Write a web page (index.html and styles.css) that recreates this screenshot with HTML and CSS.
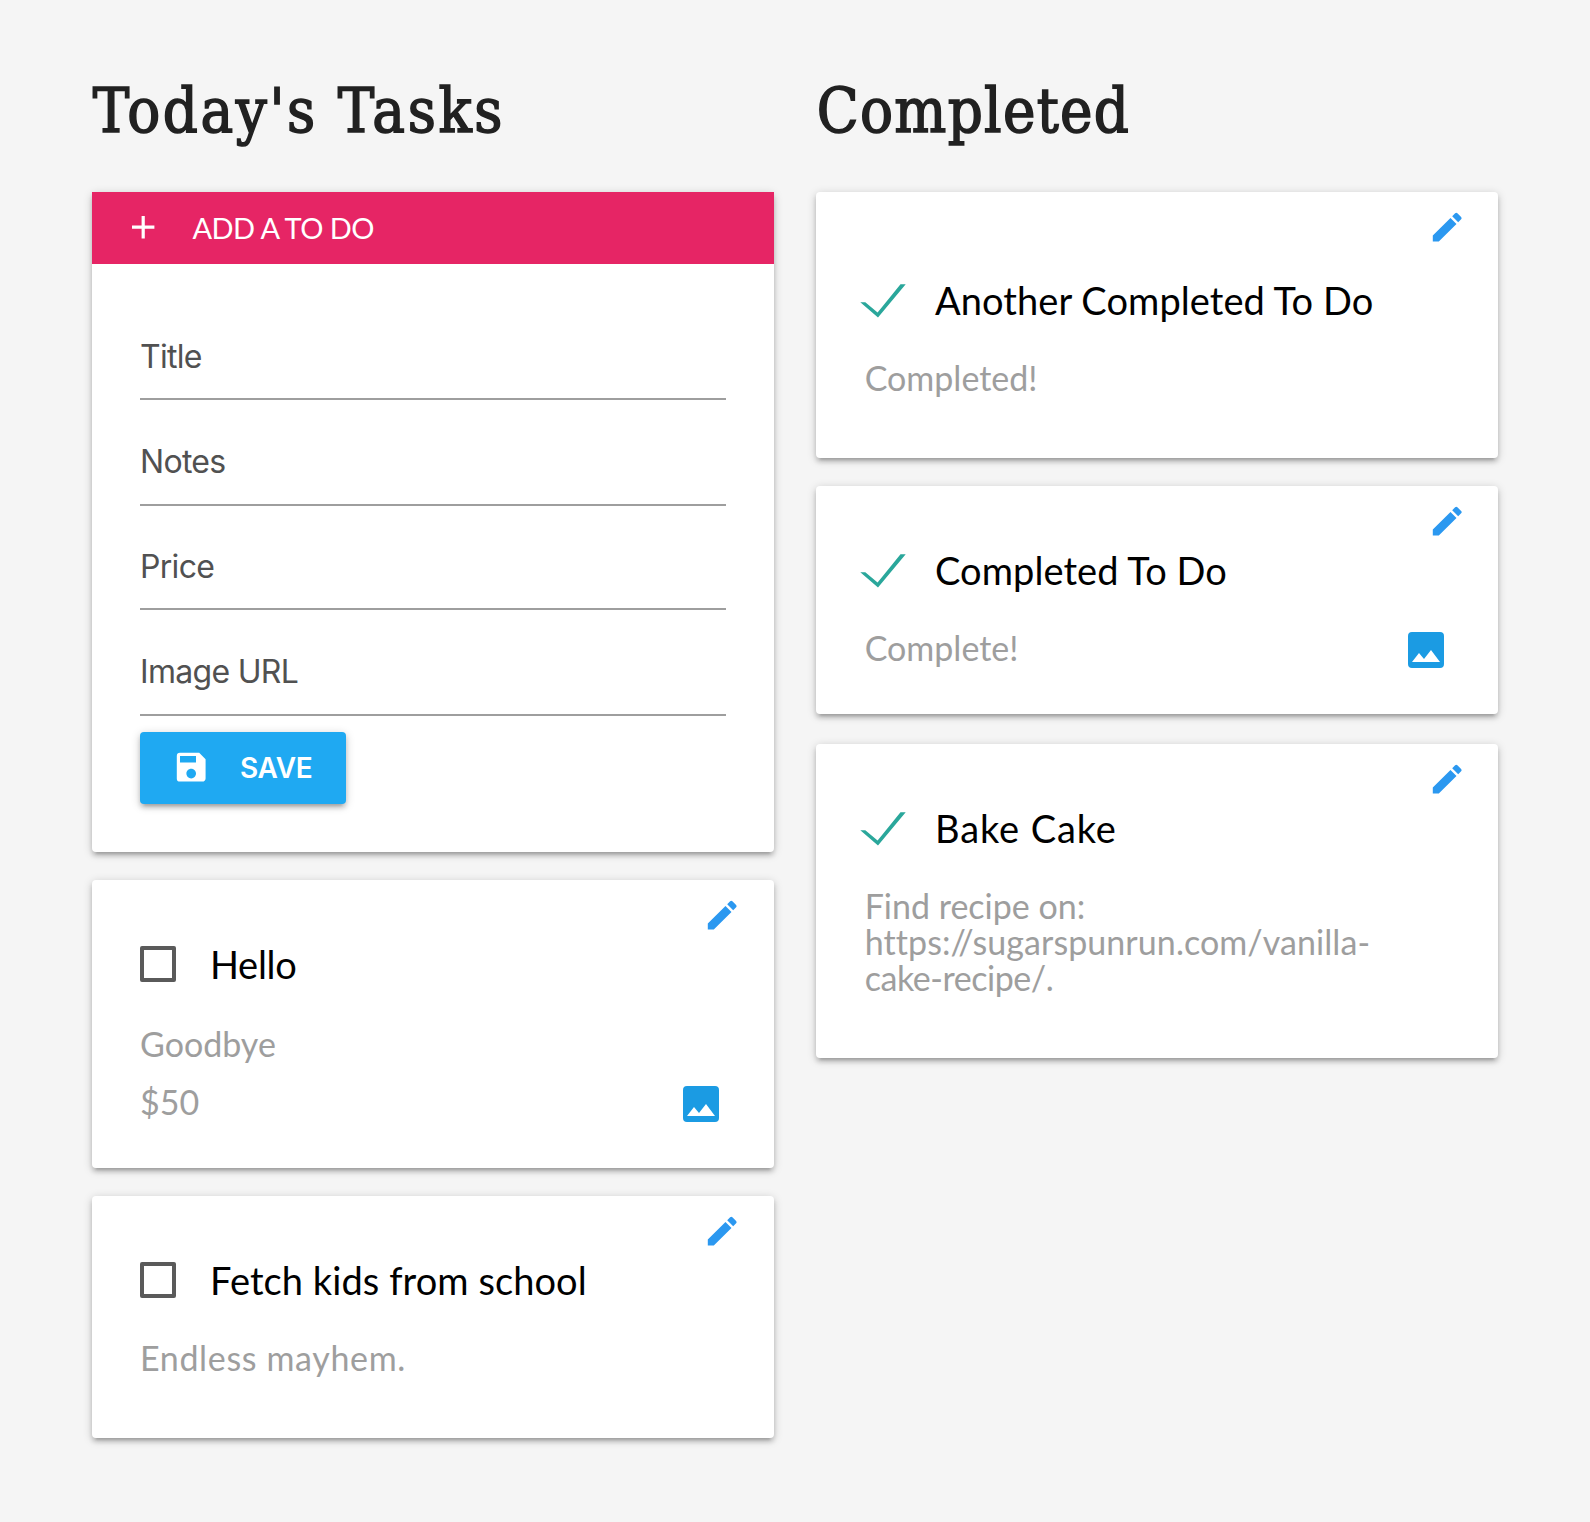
FILE: index.html
```html
<!DOCTYPE html>
<html lang="en">
<head>
<meta charset="utf-8">
<title>Today's Tasks</title>
<link rel="stylesheet" href="styles.css">
</head>
<body>
<svg class="sprite" aria-hidden="true">
  <symbol id="edit" viewBox="0 0 24 24"><path d="M3 17.25V21h3.75L17.81 9.94l-3.75-3.75L3 17.25zM20.71 7.04a1 1 0 0 0 0-1.41l-2.34-2.34a1 1 0 0 0-1.41 0l-1.83 1.83 3.75 3.75 1.83-1.83z"/></symbol>
  <symbol id="photo" viewBox="0 0 36 36"><path fill-rule="evenodd" d="M4 0H32A4 4 0 0 1 36 4V32A4 4 0 0 1 32 36H4A4 4 0 0 1 0 32V4A4 4 0 0 1 4 0ZM11 21L4 30H32L23 18L16 27Z"/></symbol>
  <symbol id="check" viewBox="0 0 46 34"><path d="M.3 18.3H5.3L17.6 28.6L40.5.3H45.7L18 33.5Z"/></symbol>
</svg>
<main class="board">
  <section class="column">
    <h1 class="heading">Today's Tasks</h1>
    <form class="card form-card">
      <div class="form-header">
        <svg class="icon" viewBox="0 0 24 24"><path d="M19 13h-6v6h-2v-6H5v-2h6V5h2v6h6v2z"/></svg>
        <span>ADD A TO DO</span>
      </div>
      <div class="fields">
        <label class="field">Title</label>
        <label class="field tall">Notes</label>
        <label class="field">Price</label>
        <label class="field tall">Image URL</label>
        <button class="save" type="button">
          <svg class="icon" viewBox="0 0 24 24"><path d="M17 3H5a2 2 0 0 0-2 2v14a2 2 0 0 0 2 2h14c1.1 0 2-.9 2-2V7l-4-4zm-5 16c-1.66 0-3-1.34-3-3s1.34-3 3-3 3 1.34 3 3-1.34 3-3 3zm3-10H5V5h10v4z"/></svg>
          <span>SAVE</span>
        </button>
      </div>
    </form>
    <article class="card card-priced">
      <svg class="edit"><use href="#edit"/></svg>
      <div class="title snug"><i class="box"></i><span>Hello</span></div>
      <p class="notes">Goodbye</p>
      <div class="price"><span>$50</span><svg class="photo"><use href="#photo"/></svg></div>
    </article>
    <article class="card card-plain">
      <svg class="edit"><use href="#edit"/></svg>
      <div class="title"><i class="box"></i><span>Fetch kids from school</span></div>
      <p class="notes loose">Endless mayhem.</p>
    </article>
  </section>
  <section class="column done">
    <h1 class="heading">Completed</h1>
    <article class="card card-spaced">
      <svg class="edit"><use href="#edit"/></svg>
      <div class="title"><svg class="check"><use href="#check"/></svg><span>Another Completed To Do</span></div>
      <p class="notes">Completed!</p>
    </article>
    <article class="card card-photo">
      <svg class="edit"><use href="#edit"/></svg>
      <div class="title"><svg class="check"><use href="#check"/></svg><span>Completed To Do</span></div>
      <div class="notes with-photo"><span>Complete!</span><svg class="photo"><use href="#photo"/></svg></div>
    </article>
    <article class="card card-long">
      <svg class="edit"><use href="#edit"/></svg>
      <div class="title loose"><svg class="check"><use href="#check"/></svg><span>Bake Cake</span></div>
      <p class="notes">Find recipe on:<br><span class="url">https://sugarspunrun.com/vanilla-</span><br><span class="url-end">cake-recipe/.</span></p>
    </article>
  </section>
</main>
</body>
</html>
```
FILE: styles.css
```css
* { box-sizing: border-box; }
body { margin: 0; background: #f5f5f5; font-family: Lato, sans-serif; }
.sprite { display: none; }
.board { display: grid; grid-template-columns: 682px 682px; column-gap: 42px; padding: 0 92px; height: 1522px; }
.heading { height: 192px; margin: 0; padding: 75px 0 0 .7px; font: 400 61px/72px "DejaVu Serif Condensed", "DejaVu Serif", serif; letter-spacing: 2.6px; color: #212121; -webkit-text-stroke: 1.5px #212121; white-space: nowrap; }
.done .heading { letter-spacing: 1.3px; }
.card { position: relative; margin: 0 0 28px; padding: 48px; background: #fff; border-radius: 4px; box-shadow: 0 4px 4px 0 rgba(0,0,0,.14), 0 6px 2px -4px rgba(0,0,0,.12), 0 2px 10px 0 rgba(0,0,0,.2); }
.icon { width: 38.4px; height: 38.4px; margin-bottom: 2px; fill: #fff; flex: none; }
.form-card { height: 660px; padding: 0; }
.form-header { display: flex; align-items: center; gap: 30px; height: 72px; padding-left: 32px; background: #e62565; color: #fff; font-size: 29px; letter-spacing: -.55px; }
.form-header span { padding-bottom: 2px; }
.fields { padding: 48px; }
.field { display: block; height: 104px; padding-top: 39px; border-bottom: 2px solid #9e9e9e; font: 400 32px/44px Inter, sans-serif; letter-spacing: -.7px; color: #515151; }
.field:first-child { height: 88px; padding-top: 23px; }
.field.tall { height: 106px; padding-top: 40px; }
.save { display: flex; align-items: center; gap: 29.5px; width: 206px; height: 72px; margin-top: 16px; padding: 0 0 0 32px; border: 0; border-radius: 4px; background: #1fa9f2; color: #fff; font: 600 28px/40px Inter, sans-serif; letter-spacing: -.2px; box-shadow: 0 4px 4px 0 rgba(0,0,0,.14), 0 6px 2px -4px rgba(0,0,0,.12), 0 2px 10px 0 rgba(0,0,0,.2); }
.edit { position: absolute; top: 16px; right: 32.6px; width: 38.4px; height: 38.4px; fill: #2b98f0; }
.done .edit { right: 32px; }
.title { display: flex; align-items: center; height: 72px; font-size: 38px; letter-spacing: .08px; color: #000; white-space: nowrap; }
.title.snug { letter-spacing: -.3px; }
.title.loose { letter-spacing: .9px; }
.box { width: 36px; height: 36px; margin-right: 34px; border: 4px solid #5a5a5a; border-radius: 2px; }
.check { width: 46px; height: 34px; margin: 2px 29px 0 -4px; fill: #2aa79b; }
.notes { margin: 24px 0 0; font-size: 34px; line-height: 36px; color: #9e9e9e; }
.notes.loose { letter-spacing: .65px; }
.done .notes { padding-left: .7px; }
.url { letter-spacing: .07px; }
.url-end { letter-spacing: -.45px; }
.price, .with-photo { display: flex; justify-content: space-between; align-items: flex-start; }
.price { margin-top: 22px; font-size: 34px; line-height: 36px; color: #9e9e9e; }
.photo { width: 36px; height: 36px; margin: 2px 7px 0 0; fill: #1b9be3; }
.done .photo { margin-right: 6.5px; }
.card-priced { height: 288px; }
.card-priced .notes { margin-top: 26px; }
.card-plain { height: 242px; }
.card-spaced { height: 266px; padding-top: 72px; }
.card-photo { height: 228px; margin-bottom: 30px; }
.card-long { height: 314px; }
```
